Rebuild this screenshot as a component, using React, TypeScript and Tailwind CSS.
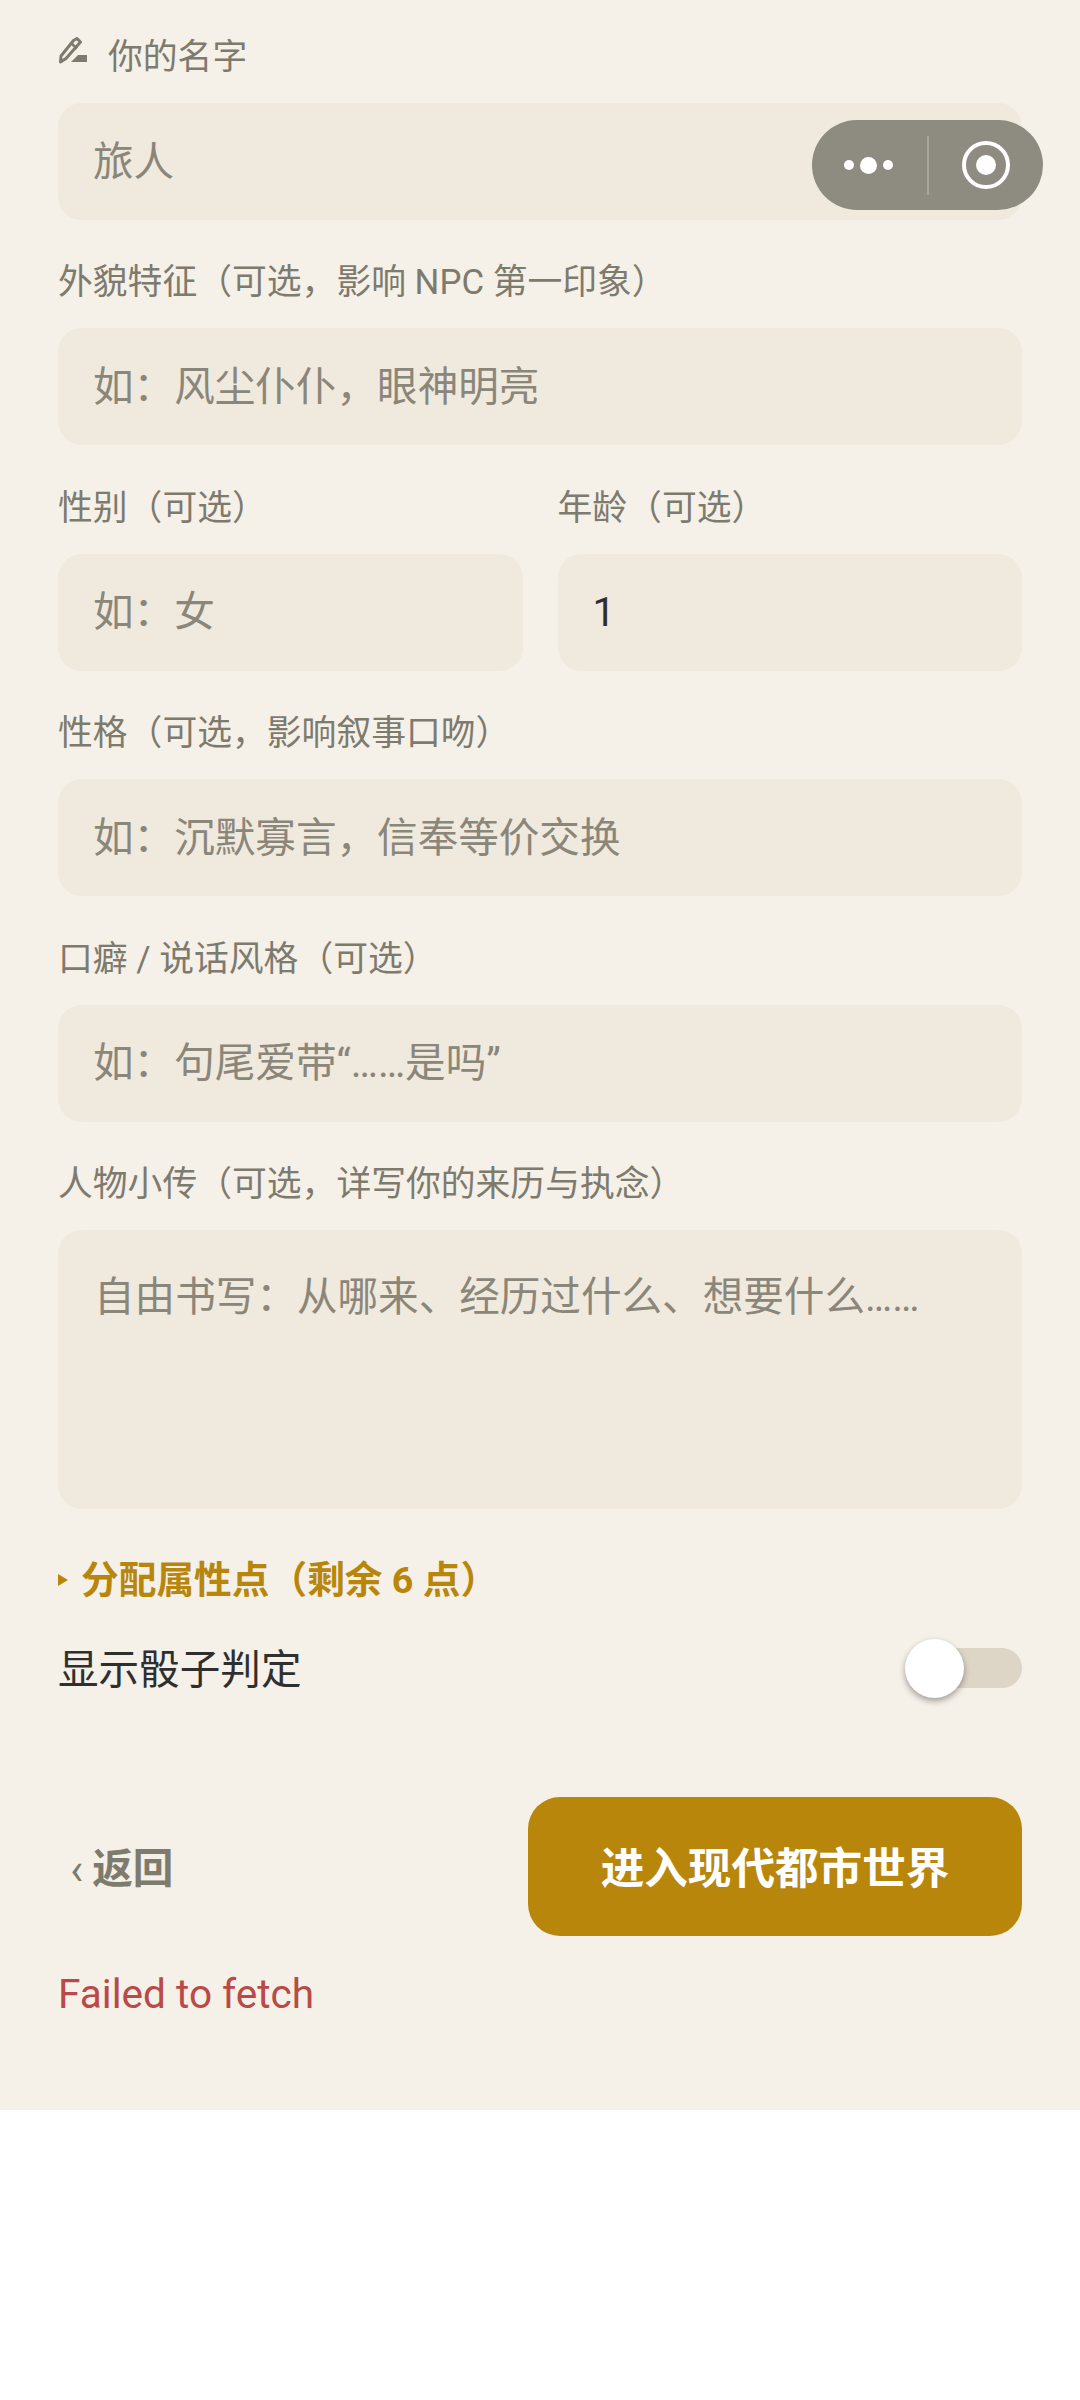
const fieldClass =
  'block w-full h-[117px] rounded-[24px] bg-[#f0e9dd] px-[35px] text-[40.6px] text-[#2f2f2f] placeholder:text-[#8a867a] outline-none'

function PenIcon() {
  return (
    <svg width="30" height="28" viewBox="0 0 30 28" className="shrink-0 -mt-[14px] text-[#7d7a6e]">
      <path d="M15.5 3.5 L19 1.5 L22.5 5 L8 21.5 L2.5 25 L3 19 Z" fill="none" stroke="currentColor" strokeWidth="3" strokeLinejoin="round" />
      <path d="M14 7 L19 11.5" stroke="currentColor" strokeWidth="2.5" />
      <path d="M20 18 L29 18 L29 25 L13 25 Z" fill="currentColor" />
    </svg>
  )
}

function Field({ label, placeholder, value, icon }: { label: string; placeholder?: string; value?: string; icon?: boolean }) {
  return (
    <div className="flex-1 min-w-0">
      <div className="flex items-center gap-[20px] h-[48px] pt-[5px] mb-[24px] text-[34.8px] leading-[43px] text-[#7d7a6e]">
        {icon && <PenIcon />}
        <span>{label}</span>
      </div>
      <input className={fieldClass} placeholder={placeholder} defaultValue={value} />
    </div>
  )
}

function Capsule() {
  return (
    <div className="absolute left-[812px] top-[120px] w-[231px] h-[90px] rounded-full bg-[#8e8b80] flex items-center">
      <div className="w-[115px] flex items-center justify-center gap-[6px] pr-[2px]">
        <span className="w-[10px] h-[10px] rounded-full bg-white" />
        <span className="w-[17px] h-[17px] rounded-full bg-white" />
        <span className="w-[10px] h-[10px] rounded-full bg-white" />
      </div>
      <div className="w-[2px] h-[59px] bg-[#a9a69c]" />
      <div className="flex-1 flex items-center justify-center">
        <div className="w-[48px] h-[48px] rounded-full border-[4px] border-white flex items-center justify-center">
          <span className="w-[20px] h-[20px] rounded-full bg-white" />
        </div>
      </div>
    </div>
  )
}

export default function App() {
  return (
    <div className="relative min-h-[2400px] bg-white font-['Roboto','Noto_Sans_CJK_SC',sans-serif]">
      <div className="h-[2110px] bg-[#f5f0e8] px-[58px] pt-[31px]">
        <div className="flex flex-col gap-[36.4px]">
          <Field icon label="你的名字" placeholder="旅人" />
          <Field label="外貌特征（可选，影响 NPC 第一印象）" placeholder="如：风尘仆仆，眼神明亮" />
          <div className="flex gap-[35px]">
            <Field label="性别（可选）" placeholder="如：女" />
            <Field label="年龄（可选）" value="1" />
          </div>
          <Field label="性格（可选，影响叙事口吻）" placeholder="如：沉默寡言，信奉等价交换" />
          <Field label="口癖 / 说话风格（可选）" placeholder="如：句尾爱带“……是吗”" />
          <div>
            <div className="h-[48px] pt-[5px] mb-[24px] text-[34.8px] leading-[43px] text-[#7d7a6e]">人物小传（可选，详写你的来历与执念）</div>
            <textarea
              className="block w-full h-[279px] resize-none rounded-[24px] bg-[#f0e9dd] px-[36px] py-[40px] text-[40.6px] leading-[54px] text-[#2f2f2f] placeholder:text-[#8a867a] outline-none"
              placeholder="自由书写：从哪来、经历过什么、想要什么……"
            />
          </div>
        </div>

        <div className="flex items-center h-[48px] mt-[47px] text-[#b8860b] text-[37.7px] font-bold leading-[48px]">
          <span className="w-0 h-0 border-y-[6px] border-y-transparent border-l-[10px] border-l-[#b8860b] mr-[13px]" />
          分配属性点（剩余 6 点）
        </div>

        <div className="flex items-center justify-between h-[60px] mt-[34px]">
          <span className="pt-[5px] text-[40.6px] text-[#2f2f2f]">显示骰子判定</span>
          <div className="relative w-[88px] h-[40px] rounded-full bg-[#ddd6c6]">
            <span className="absolute left-[-29px] top-[-9px] w-[59px] h-[59px] rounded-full bg-white shadow-[0_3px_6px_rgba(0,0,0,0.35)]" />
          </div>
        </div>

        <div className="flex items-center justify-between mt-[99px]">
          <button className="flex items-center gap-[9px] pl-[12px] pt-[5px] text-[40.6px] font-bold text-[#7d7a6e]">
            <span className="text-[44px] font-normal">‹</span>
            返回
          </button>
          <button className="w-[494px] h-[139px] pt-[6px] rounded-[32px] bg-[#b8860b] text-white text-[43.6px] font-bold">
            进入现代都市世界
          </button>
        </div>

        <div className="mt-[32px] text-[40.6px] leading-[52px] text-[#b94a48]">Failed to fetch</div>
      </div>
      <Capsule />
    </div>
  )
}
